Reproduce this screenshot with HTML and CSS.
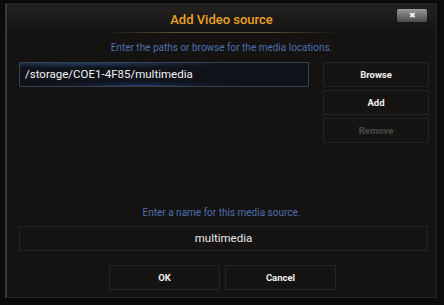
FILE: index.html
```html
<!DOCTYPE html>
<html>
<head>
<meta charset="utf-8">
<link rel="stylesheet" href="styles.css">
</head>
<body>
<div class="dialog">
  <div class="titlebar">
    <div class="title">Add Video source</div>
    <div class="close">&#x2716;</div>
  </div>
  <div class="sep"></div>
  <div class="hint">Enter the paths or browse for the media locations.</div>
  <div class="paths">
    <div class="pathbox">/storage/COE1-4F85/multimedia</div>
    <div class="side">
      <div class="btn">Browse</div>
      <div class="btn">Add</div>
      <div class="btn disabled">Remove</div>
    </div>
  </div>
  <div class="hint name-hint">Enter a name for this media source.</div>
  <div class="namebox">multimedia</div>
  <div class="actions">
    <div class="btn act">OK</div>
    <div class="btn act">Cancel</div>
  </div>
</div>
</body>
</html>
```
FILE: styles.css
```css
html, body {
  margin: 0;
  padding: 0;
  background: #0b0b0a;
  width: 444px;
  height: 305px;
  overflow: hidden;
  font-family: Roboto, "Liberation Sans", sans-serif;
}
body {
  padding: 3px 7px 5px 5px;
  box-sizing: border-box;
}
.dialog {
  box-sizing: border-box;
  width: 432px;
  height: 295px;
  background: #141311;
  border: 1px solid #262523;
  border-left: 2px solid #3a3936;
  display: flex;
  flex-direction: column;
  box-shadow: 0 0 0 1px #080808;
}
.titlebar {
  position: relative;
  height: 28px;
  background: linear-gradient(#232220, #1a1917 60%, #151412);
  display: flex;
  align-items: center;
  justify-content: center;
}
.title {
  color: #eba123;
  font-size: 13px;
  font-weight: 500;
  padding-top: 2px;
}
.close {
  position: absolute;
  right: 9px;
  top: 5px;
  width: 30px;
  height: 13px;
  background: linear-gradient(#9a9a98, #6d6d6b 55%, #4a4a48);
  border-radius: 2px;
  color: #f4f4f4;
  font-size: 8px;
  line-height: 13px;
  text-align: center;
}
.sep {
  height: 1px;
  margin: 0 95px;
  background: linear-gradient(90deg, rgba(120,100,60,0), #5a4d36 30%, #5a4d36 70%, rgba(120,100,60,0));
}
.hint {
  color: #4f6fae;
  font-size: 10px;
  text-align: center;
  margin-top: 9px;
  height: 12px;
  line-height: 12px;
}
.paths {
  display: flex;
  margin: 8px 0 0 12px;
  gap: 14px;
}
.pathbox {
  box-sizing: border-box;
  width: 290px;
  height: 25px;
  border: 1px solid #37404f;
  background:
    radial-gradient(ellipse 110px 7px at 120px 25px, rgba(60,130,220,0.7), rgba(30,70,140,0.2) 60%, rgba(0,0,0,0) 100%),
    radial-gradient(ellipse 150px 5px at 60px 0px, rgba(60,120,200,0.4), rgba(0,0,0,0) 100%),
    #11131a;
  color: #f2f2f2;
  font-size: 11.5px;
  line-height: 23px;
  padding-left: 5px;
}
.side {
  display: flex;
  flex-direction: column;
  gap: 3px;
}
.btn {
  box-sizing: border-box;
  width: 106px;
  height: 25px;
  border: 1px solid #262523;
  background: #151412;
  color: #f0f0f0;
  font-size: 9.5px;
  font-weight: bold;
  text-align: center;
  line-height: 23px;
}
.btn.disabled {
  color: #4a4a48;
}
.name-hint {
  margin-top: 64px;
}
.namebox {
  box-sizing: border-box;
  margin: 7px 8px 0 12px;
  height: 25px;
  border: 1px solid #252422;
  background: #151412;
  color: #e8e8e8;
  font-size: 11.5px;
  text-align: center;
  line-height: 23px;
}
.actions {
  display: flex;
  justify-content: center;
  gap: 5px;
  margin-top: 14px;
  padding-left: 2px;
}
.btn.act {
  width: 111px;
}
```
